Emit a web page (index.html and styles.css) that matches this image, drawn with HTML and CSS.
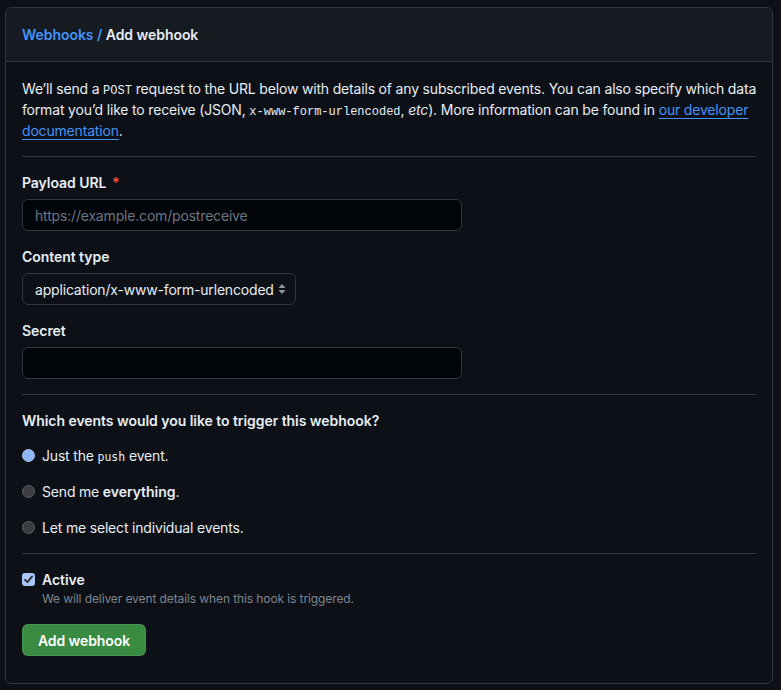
FILE: index.html
```html
<!DOCTYPE html>
<html lang="en">
<head>
<meta charset="utf-8">
<title>Add webhook</title>
<link rel="stylesheet" href="styles.css">
</head>
<body>
<div class="box">
  <div class="box-header">
    <a class="crumb" href="#">Webhooks</a><span class="sep"> / </span><span class="title">Add webhook</span>
  </div>
  <div class="box-body">
    <p class="intro">We’ll send a <code>POST</code> request to the URL below with details of any subscribed events. You can also specify which data format you’d like to receive (JSON, <code>x-www-form-urlencoded</code>, <em>etc</em>). More information can be found in <a href="#">our developer documentation</a>.</p>
    <hr class="divider">
    <div class="field">
      <label class="label">Payload URL <span class="req">*</span></label>
      <input class="input" type="text" placeholder="https://example.com/postreceive">
    </div>
    <div class="field">
      <label class="label">Content type</label>
      <div class="select">
        <span class="select-text">application/x-www-form-urlencoded</span>
        <svg class="arrows" width="8" height="12" viewBox="0 0 8 12"><path d="M4 1 L7.5 5 H0.5 Z M4 11 L7.5 7 H0.5 Z" fill="#8b949e"/></svg>
      </div>
    </div>
    <div class="field">
      <label class="label">Secret</label>
      <input class="input" type="text">
    </div>
    <hr class="divider">
    <div class="label events-q">Which events would you like to trigger this webhook?</div>
    <div class="radios">
      <label class="radio-row"><span class="radio checked"></span><span class="rtext">Just the <code class="small">push</code> event.</span></label>
      <label class="radio-row"><span class="radio"></span><span class="rtext">Send me <strong>everything</strong>.</span></label>
      <label class="radio-row"><span class="radio"></span><span class="rtext">Let me select individual events.</span></label>
    </div>
    <hr class="divider">
    <div class="check-row">
      <span class="checkbox"><svg width="11" height="11" viewBox="0 0 11 11"><path d="M2 5.8 L4.4 8.2 L9 2.6" fill="none" stroke="#2b2f36" stroke-width="1.9" stroke-linecap="round" stroke-linejoin="round"/></svg></span>
      <div>
        <div class="check-label">Active</div>
        <div class="note">We will deliver event details when this hook is triggered.</div>
      </div>
    </div>
    <button class="btn">Add webhook</button>
  </div>
</div>
</body>
</html>
```

FILE: styles.css
```css
html, body {
  margin: 0;
  background: #0d1117;
}
body {
  padding: 7px 8px 0 5px;
  font-family: Inter, "Noto Sans", sans-serif;
  font-size: 14px;
  line-height: 21px;
  color: #e6edf3;
  letter-spacing: -0.18px;
}
.box {
  border: 1px solid #30363d;
  border-radius: 6px;
  overflow: hidden;
}
.box-header {
  background: #161b22;
  padding: 16px;
  border-bottom: 1px solid #30363d;
  font-weight: 600;
  letter-spacing: -0.05px;
}
.crumb, .sep {
  color: #4493f8;
  text-decoration: none;
}
.title { color: #e6edf3; }
.box-body {
  padding: 16px 16px 27px;
}
.intro {
  margin: 0 -12px 0 0;
}
.intro a {
  color: #4493f8;
  text-decoration: underline;
  text-underline-offset: 3px;
}
code {
  font-family: "Liberation Mono", "DejaVu Sans Mono", monospace;
  font-size: 12px;
  line-height: 1;
  letter-spacing: 0;
}
.divider {
  border: 0;
  border-top: 1px solid #30363d;
  margin: 15px 0 15px;
}
.field {
  margin-bottom: 15px;
}
.label {
  display: block;
  font-weight: 600;
  margin-bottom: 6px;
  letter-spacing: -0.05px;
}
.req {
  color: #f85149;
  margin-left: 2px;
}
.input {
  display: block;
  box-sizing: border-box;
  width: 440px;
  height: 32px;
  padding: 0 12px;
  background: #010409;
  border: 1px solid #30363d;
  border-radius: 6px;
  color: #e6edf3;
  font-family: inherit;
  font-size: 14px;
  letter-spacing: -0.18px;
  outline: none;
}
.input::placeholder { color: #6e7681; }
.select {
  box-sizing: border-box;
  width: 274px;
  height: 32px;
  display: flex;
  align-items: center;
  justify-content: space-between;
  padding: 0 9px 0 12px;
  background: #0d1117;
  border: 1px solid #30363d;
  border-radius: 6px;
}
.select-text {
  white-space: nowrap;
}
.events-q {
  margin-bottom: 0;
  margin-top: 0;
}
.radios {
  display: flex;
  flex-direction: column;
  gap: 15px;
  margin-top: 14px;
}
.radio-row {
  display: flex;
  align-items: center;
  gap: 7px;
}
.radio {
  box-sizing: border-box;
  width: 13px;
  height: 13px;
  border-radius: 50%;
  background: #3b3d41;
  border: 1px solid #5b5e63;
  flex: none;
}
.radio.checked {
  background: #8fb6f7;
  border: 1.5px solid #b4c3de;
}
code.small {
  font-family: "DejaVu Sans Mono", monospace;
  font-size: 11.5px;
}
strong { font-weight: 600; letter-spacing: -0.05px; }
.check-row {
  display: flex;
  gap: 7px;
  margin-top: 15px;
}
.checkbox {
  box-sizing: border-box;
  width: 13px;
  height: 13px;
  margin-top: 4px;
  background: #a9c6f8;
  border-radius: 3px;
  display: flex;
  align-items: center;
  justify-content: center;
  flex: none;
}
.check-label {
  font-weight: 600;
  letter-spacing: -0.05px;
}
.note {
  font-size: 12px;
  line-height: 18px;
  color: #7d8590;
  letter-spacing: -0.1px;
}
.btn {
  margin-top: 16px;
  height: 32px;
  padding: 0 15px;
  background: #388b41;
  color: #ffffff;
  border: 1px solid rgba(240,246,252,0.1);
  border-radius: 6px;
  font-family: inherit;
  font-size: 14px;
  font-weight: 600;
  letter-spacing: -0.1px;
}
```
